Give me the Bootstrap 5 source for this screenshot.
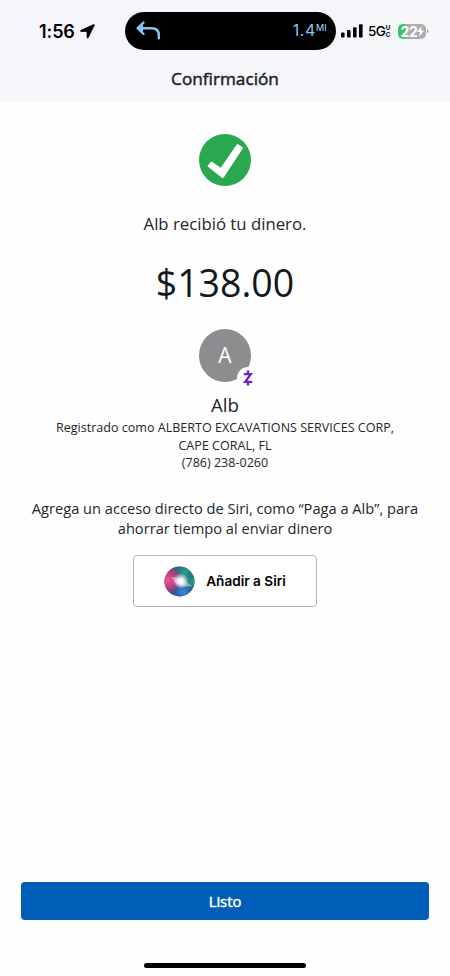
<!DOCTYPE html>
<html lang="es">
<head>
  <meta charset="UTF-8">
  <meta name="viewport" content="width=device-width, initial-scale=1">
  <title>Confirmación</title>
  <link href="https://cdn.jsdelivr.net/npm/bootstrap@5.3.3/dist/css/bootstrap.min.css" rel="stylesheet">
  <style>
    body { font-family: "Open Sans", "Noto Sans", sans-serif; color: #22272b; background: #fefefe; }
    svg { display: block; flex: none; }
    .screen { height: 976px; overflow: hidden; }
    .top-area { height: 102px; background: #f5f6f9; }
    .status-row { height: 62px; font-family: Inter, sans-serif; color: #000; }
    .clock { width: 125px; padding-left: 39px; font-size: 18px; font-weight: 600; letter-spacing: -.1px; gap: 5px; }
    .island { width: 211px; height: 38px; background: #000; color: #86c5f2; padding: 0 9px 0 11px; }
    .miles { font-size: 16px; letter-spacing: .6px; line-height: 20px; }
    .miles small { font-size: 9px; font-weight: 500; position: relative; top: -5px; letter-spacing: .2px; }
    .signal { padding-left: 5px; }
    .net { font-size: 13.5px; font-weight: 500; letter-spacing: -.5px; margin-left: 5px; line-height: 16px; }
    .net-sub { font-size: 6.2px; font-weight: 700; line-height: 7.5px; width: 5px; }
    .battery { width: 28px; height: 15px; border-radius: 5px; margin-left: 8px; color: #fff; font-size: 14px; font-weight: 700; letter-spacing: -.4px; background: linear-gradient(90deg, #35c759 7px, #adadad 7px); }
    .page-title { font-size: 17.2px; line-height: 24px; font-weight: 400; -webkit-text-stroke: .45px #1b2024; color: #1b2024; margin-top: 5px; }
    .check-icon { margin-top: 32px; }
    .received { font-size: 16.75px; line-height: 24px; margin-top: 26px; }
    .amount { font-size: 37.5px; line-height: 52px; margin-top: 21px; color: #12181c; }
    .avatar { width: 52px; height: 53px; margin-top: 20px; }
    .avatar-letter { width: 52px; height: 53px; border-radius: 50%; background: #8d8d8f; color: #fff; font-size: 21px; }
    .zelle { position: absolute; left: 38px; top: 38px; width: 22px; height: 22px; border-radius: 50%; background: #fefefe; }
    .payee { font-size: 18.7px; line-height: 26px; margin-top: 10px; }
    .details { font-size: 12.55px; line-height: 17.7px; margin-top: 1px; }
    .siri-text { font-size: 14.65px; line-height: 20px; margin-top: 26px; }
    .siri-btn { width: 184px; height: 52px; margin-top: 17px; border: 1px solid #b5b5b7; border-radius: 4px; background: #fff; color: #000; font-family: Inter, sans-serif; font-size: 13.6px; font-weight: 600; gap: 11px; }
    .done-btn { height: 38px; margin: 0 21px; background: #005eb8; border-radius: 4px; color: #fff; font-size: 14.8px; font-weight: 400; -webkit-text-stroke: .45px #fff; }
    .home-bar { width: 162px; height: 5px; border-radius: 3px; background: #000; margin: 43px auto 8px; }
  </style>
</head>
<body>
  <div class="screen d-flex flex-column">
    <header class="top-area text-center">
      <div class="status-row d-flex align-items-center">
        <div class="clock d-flex align-items-center">
          <span>1:56</span>
          <svg width="15" height="15" viewBox="0 0 15 15"><path stroke="#000" stroke-width=".7" stroke-linejoin="round" d="M13.600.6 1 6.200c-.8.4-.6 1.300.2 1.300h5.800v5.900c0 .8.9 1 1.300.2L14.300 1.200c.2-.5-.1-.8-.7-.6z"/></svg>
        </div>
        <div class="island rounded-pill d-flex align-items-center justify-content-between">
          <svg width="25" height="20" viewBox="0 0 25 20" fill="none" stroke="#86c5f2" stroke-width="2.400" stroke-linecap="round" stroke-linejoin="round"><path d="M7.500 1.500 1.700 7.200 7.500 13M2.100 7.200H15.500c5 0 7.300 2.300 7.300 6.800v3.300"/><path d="M7 3 2.700 7.200 7 11.400Z" fill="#86c5f2" stroke="none"/></svg>
          <span class="miles">1.4<small>MI</small></span>
        </div>
        <div class="signal d-flex align-items-center">
          <svg width="22" height="14" viewBox="0 0 22 14"><rect x="0" y="8.500" width="3.600" height="5" rx="1"/><rect x="6" y="6" width="3.600" height="7.500" rx="1"/><rect x="12" y="3.300" width="3.600" height="10.200" rx="1"/><rect x="18" y=".3" width="3.600" height="13.200" rx="1"/></svg>
          <span class="net">5G</span>
          <span class="net-sub d-flex flex-column"><span>U</span><span>C</span></span>
          <span class="battery d-flex align-items-center justify-content-center">22<svg width="7" height="11" viewBox="0 0 7 11"><path fill="#fff" d="M4.800 0 0 6h3L2 11l5-6.400H4z"/></svg></span>
          <svg width="3" height="6" viewBox="0 0 3 6"><path fill="#adadad" d="M1 1c2 .5 2 3.500 0 4z"/></svg>
        </div>
      </div>
      <h1 class="page-title mb-0">Confirmación</h1>
    </header>

    <main class="flex-grow-1 d-flex flex-column align-items-center text-center">
      <svg class="check-icon" width="52" height="52" viewBox="0 0 52 52"><circle cx="26" cy="26" r="26" fill="#2ba84f"/><path d="M9.500 32 12.500 28.500 22 35 38.500 11 43 14 23.800 43.200Z" fill="#fff" stroke="#fff" stroke-width="1.800" stroke-linejoin="round"/></svg>
      <p class="received mb-0">Alb recibió tu dinero.</p>
      <div class="amount">$138.00</div>

      <div class="avatar position-relative">
        <div class="avatar-letter d-flex align-items-center justify-content-center">A</div>
        <span class="zelle d-flex align-items-center justify-content-center">
          <svg width="10" height="16" viewBox="0 0 10 16" fill="none" stroke="#6d1ed4" stroke-width="2.300"><path d="M.8 4.200H7.700L2.300 11.800H9.200M5 .5V4M5 12v3.500"/></svg>
        </span>
      </div>

      <div class="payee">Alb</div>
      <div class="details">
        Registrado como ALBERTO EXCAVATIONS SERVICES CORP,<br>
        CAPE CORAL, FL<br>
        (786) 238-0260
      </div>
      <p class="siri-text mb-0">Agrega un acceso directo de Siri, como “Paga a Alb”, para<br>ahorrar tiempo al enviar dinero</p>

      <button type="button" class="siri-btn d-flex align-items-center justify-content-center p-0">
        <svg width="31" height="31" viewBox="0 0 31 31">
          <defs>
            <radialGradient id="glow"><stop offset="0" stop-color="#fff"/><stop offset=".35" stop-color="#fff" stop-opacity=".85"/><stop offset="1" stop-color="#fff" stop-opacity="0"/></radialGradient>
            <radialGradient id="pink"><stop offset="0" stop-color="#f0549a"/><stop offset=".6" stop-color="#d83a80" stop-opacity=".8"/><stop offset="1" stop-color="#c02c6c" stop-opacity="0"/></radialGradient>
            <radialGradient id="blue"><stop offset="0" stop-color="#2f8fe8"/><stop offset="1" stop-color="#2463b8" stop-opacity="0"/></radialGradient>
            <radialGradient id="green"><stop offset="0" stop-color="#1fa483"/><stop offset="1" stop-color="#1d8a80" stop-opacity="0"/></radialGradient>
            <clipPath id="orb"><circle cx="15.500" cy="15.500" r="15"/></clipPath>
          </defs>
          <g clip-path="url(#orb)">
            <rect width="31" height="31" fill="#3d4d78"/>
            <circle cx="21" cy="6" r="14" fill="url(#green)"/>
            <circle cx="19" cy="26" r="13" fill="url(#blue)"/>
            <circle cx="28" cy="16" r="9" fill="url(#green)"/>
            <circle cx="4" cy="14" r="14" fill="url(#pink)"/>
            <path d="M7 11Q13 11 18 13L28 20Q22 21 17 20T7 11Z" fill="#fff" opacity=".4"/>
            <circle cx="17" cy="15" r="8" fill="url(#glow)"/>
          </g>
        </svg>
        <span>Añadir a Siri</span>
      </button>
    </main>

    <button type="button" class="done-btn border-0 p-0">Listo</button>
    <div class="home-bar flex-shrink-0"></div>
  </div>
  <script src="https://cdn.jsdelivr.net/npm/bootstrap@5.3.3/dist/js/bootstrap.bundle.min.js"></script>
</body>
</html>
